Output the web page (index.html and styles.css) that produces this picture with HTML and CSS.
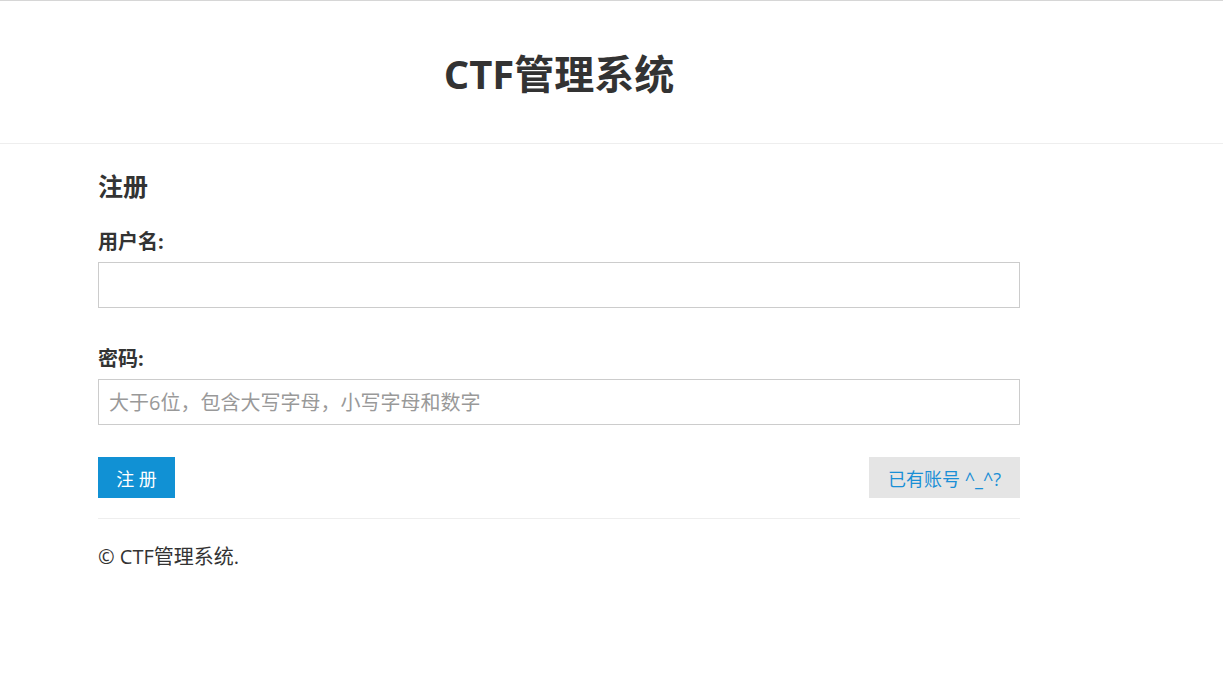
FILE: index.html
```html
<!DOCTYPE html>
<html lang="zh">
<head>
<meta charset="utf-8">
<title>CTF管理系统</title>
<link rel="stylesheet" href="styles.css">
</head>
<body>
<header class="site-header">
  <div class="container">
    <h1 class="site-title">CTF管理系统</h1>
  </div>
</header>
<main class="container main">
  <h2 class="form-title">注册</h2>
  <form class="form">
    <div class="field">
      <label class="label" for="username">用户名:</label>
      <input class="input" id="username" type="text">
    </div>
    <div class="field">
      <label class="label" for="password">密码:</label>
      <input class="input" id="password" type="password" placeholder="大于6位，包含大写字母，小写字母和数字">
    </div>
    <div class="actions">
      <button type="button" class="btn btn-primary">注 册</button>
      <a class="btn btn-secondary" href="#">已有账号 ^_^?</a>
    </div>
  </form>
  <hr class="divider">
  <footer class="footer">© CTF管理系统.</footer>
</main>
</body>
</html>
```
FILE: styles.css
```css
* { box-sizing: border-box; }
html, body { margin: 0; padding: 0; }
body {
  font-family: "Open Sans", "Noto Sans CJK SC", sans-serif;
  font-size: 20px;
  color: #333;
  background: #fff;
  border-top: 1px solid #d6d6d6;
}
.container {
  width: 922px;
  margin-left: 98px;
}
.site-header {
  border-bottom: 1px solid #eee;
  height: 143px;
  display: flex;
  align-items: center;
  padding-top: 4px;
}
.site-title {
  margin: 0;
  text-align: center;
  font-size: 40px;
  font-weight: 700;
  line-height: 1;
  color: #333;
}
.main { padding-top: 24px; }
.form-title {
  margin: 0 0 24px;
  font-size: 25px;
  font-weight: 700;
  line-height: 36px;
}
.form {
  display: flex;
  flex-direction: column;
}
.field + .field { margin-top: 37px; }
.label {
  display: block;
  font-size: 20px;
  font-weight: 700;
  line-height: 28px;
  margin-bottom: 6px;
}
.input {
  display: block;
  width: 100%;
  height: 46px;
  margin: 0;
  border: 1px solid #ccc;
  padding: 0 10px;
  font-family: inherit;
  font-size: 20px;
  color: #333;
  outline: none;
}
.input::placeholder { color: #999; }
.actions {
  display: flex;
  justify-content: space-between;
  margin-top: 32px;
}
.btn {
  height: 41px;
  display: inline-flex;
  align-items: center;
  justify-content: center;
  font-family: inherit;
  font-size: 18px;
  border: none;
  text-decoration: none;
  padding: 0;
}
.btn-primary {
  width: 77px;
  background: #1191d4;
  color: #fff;
}
.btn-secondary {
  width: 151px;
  background: #e5e5e5;
  color: #1a8fd6;
}
.divider {
  border: 0;
  border-top: 1px solid #eee;
  margin: 20px 0 0;
}
.footer {
  padding-top: 24px;
  font-size: 20px;
  line-height: 28px;
}
```
